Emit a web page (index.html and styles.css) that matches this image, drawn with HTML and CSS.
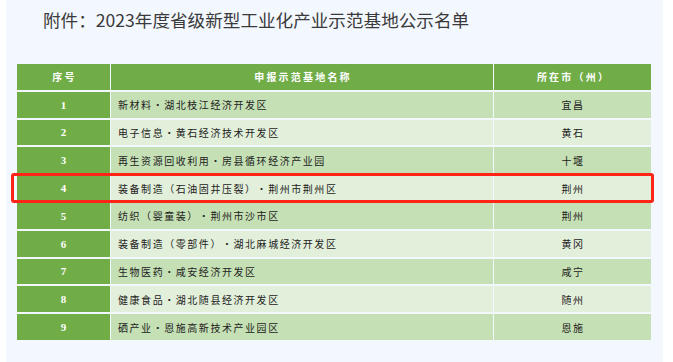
FILE: index.html
```html
<!DOCTYPE html>
<html lang="zh">
<head>
<meta charset="utf-8">
<link rel="stylesheet" href="styles.css">
</head>
<body>
<div class="panel">
  <h1 class="title">附件：2023年度省级新型工业化产业示范基地公示名单</h1>
  <div class="table">
    <div class="cell head">序号</div>
    <div class="cell head">申报示范基地名称</div>
    <div class="cell head">所在市（州）</div>

    <div class="cell num">1</div><div class="cell name odd">新材料<span class="dot">·</span>湖北枝江经济开发区</div><div class="cell city odd">宜昌</div>
    <div class="cell num">2</div><div class="cell name even">电子信息<span class="dot">·</span>黄石经济技术开发区</div><div class="cell city even">黄石</div>
    <div class="cell num">3</div><div class="cell name odd">再生资源回收利用<span class="dot">·</span>房县循环经济产业园</div><div class="cell city odd">十堰</div>
    <div class="cell num">4</div><div class="cell name even">装备制造（石油固井压裂）<span class="dot">·</span>荆州市荆州区</div><div class="cell city even">荆州</div>
    <div class="cell num">5</div><div class="cell name odd">纺织（婴童装）<span class="dot">·</span>荆州市沙市区</div><div class="cell city odd">荆州</div>
    <div class="cell num">6</div><div class="cell name even">装备制造（零部件）<span class="dot">·</span>湖北麻城经济开发区</div><div class="cell city even">黄冈</div>
    <div class="cell num">7</div><div class="cell name odd">生物医药<span class="dot">·</span>咸安经济开发区</div><div class="cell city odd">咸宁</div>
    <div class="cell num">8</div><div class="cell name even">健康食品<span class="dot">·</span>湖北随县经济开发区</div><div class="cell city even">随州</div>
    <div class="cell num">9</div><div class="cell name odd">硒产业<span class="dot">·</span>恩施高新技术产业园区</div><div class="cell city odd">恩施</div>
  </div>
  <div class="highlight"></div>
</div>
</body>
</html>
```

FILE: styles.css
```css
html, body {
  margin: 0;
  padding: 0;
  background: #ffffff;
}
.panel {
  position: relative;
  margin-left: 6px;
  width: 657px;
  height: 362px;
  background: #f3f7fe;
  overflow: hidden;
}
.title {
  margin: 0;
  padding: 9px 0 0 37px;
  height: 55px;
  box-sizing: border-box;
  font-family: "Noto Sans CJK SC", "DejaVu Sans Mono", sans-serif;
  font-weight: 400;
  font-size: 17.6px;
  line-height: 22px;
  color: #3a3a3a;
  text-spacing-trim: space-all;
}
.table {
  margin-left: 11px;
  margin-top: 9px;
  display: grid;
  grid-template-columns: 93px 382px 157px;
  grid-auto-rows: 25.8px;
  gap: 2px 1px;
  width: 634px;
}
.cell {
  display: flex;
  align-items: center;
  font-family: "Noto Sans CJK SC", sans-serif;
  font-size: 10px;
  letter-spacing: 1.55px;
  color: #222222;
  white-space: nowrap;
  text-spacing-trim: space-all;
}
.dot {
  display: inline-block;
  width: 10px;
  margin-right: 1.55px;
  letter-spacing: 0;
  text-align: center;
}
.head {
  background: #70ad47;
  color: #ffffff;
  font-weight: 700;
  justify-content: center;
  letter-spacing: 2.2px;
  padding-left: 2px;
}
.num {
  background: #70ad47;
  color: #ffffff;
  font-family: "Liberation Serif", serif;
  font-weight: 700;
  font-size: 11px;
  justify-content: center;
  letter-spacing: 0;
}
.name {
  padding-left: 7px;
}
.city {
  justify-content: center;
  padding-left: 1px;
}
.odd {
  background: #c5e0b4;
}
.even {
  background: #e2efda;
}
.highlight {
  position: absolute;
  left: 5px;
  top: 173px;
  width: 643px;
  height: 30px;
  box-sizing: border-box;
  border: 3.5px solid #fe2418;
  border-radius: 3px;
}
```
